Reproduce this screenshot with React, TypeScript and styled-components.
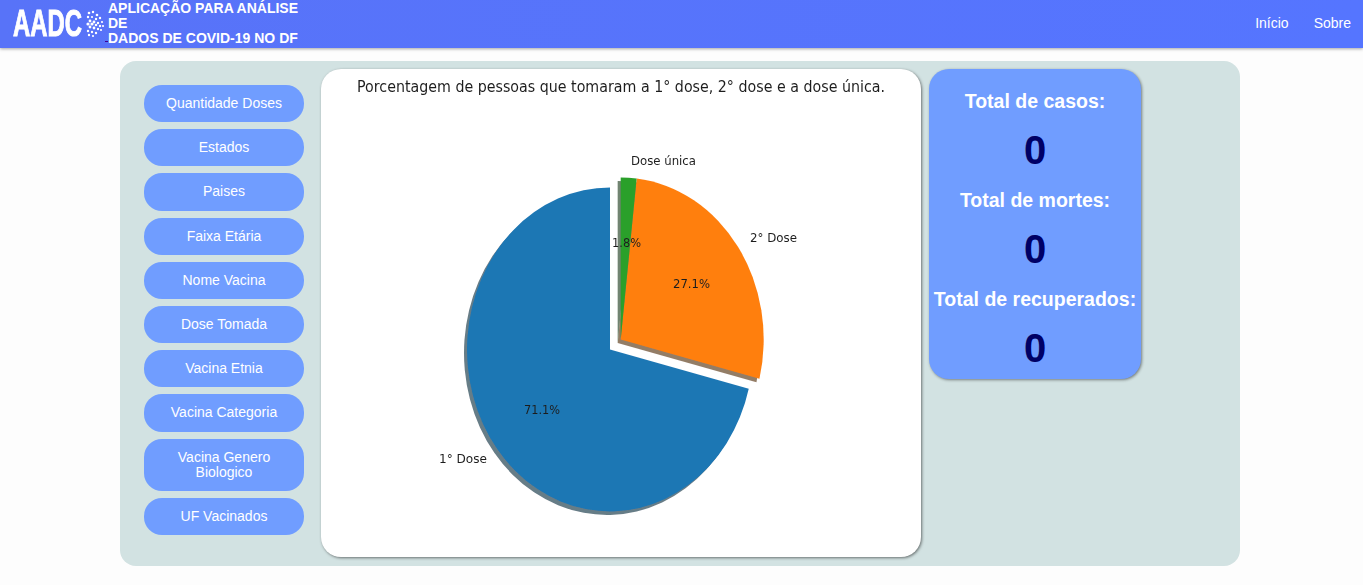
import React from "react";
import styled, { createGlobalStyle } from "styled-components";

const Global = createGlobalStyle`
  html, body { margin: 0; padding: 0; background: #fdfdfd; font-family: "Liberation Sans", Arial, sans-serif; }
`;

const Header = styled.header`
  height: 48px;
  display: flex;
  align-items: center;
  justify-content: space-between;
  background: linear-gradient(90deg, #5873f8 0%, #5575ff 100%);
  box-shadow: 0 1px 3px rgba(0, 0, 0, 0.35);
  color: #fff;
  padding: 0 12px 0 13px;
  position: relative;
`;

const Brand = styled.div`
  display: flex;
  align-items: center;
  position: relative;
`;

const LogoWrap = styled.div`
  width: 95px;
  height: 48px;
  display: flex;
  align-items: center;
  position: relative;
`;

const LogoWord = styled.span`
  display: inline-block;
  font-weight: 700;
  font-size: 37px;
  line-height: 30px;
  width: 71px;
  transform: scaleX(0.645);
  transform-origin: left center;
  white-space: nowrap;
  -webkit-text-stroke: 1px #fff;
  letter-spacing: 0;
`;

const LogoVirus = styled.svg`
  display: block;
  width: 20px;
  height: 30px;
  flex: none;
  margin-left: 1px;
`;

const LinkMark = styled.span`
  position: absolute;
  left: 92px;
  top: 41px;
  width: 3px;
  height: 1px;
  background: #400090;
`;

const Title = styled.div`
  font-size: 14px;
  font-weight: 700;
  line-height: 15px;
  margin-top: -1px;
  width: 210px;
`;

const Nav = styled.nav`
  display: flex;
  gap: 25px;
  font-size: 14px;
  margin-top: -2px;
`;

const Panel = styled.main`
  width: 1120px;
  height: 505px;
  box-sizing: border-box;
  margin: 13px 0 0 120px;
  padding: 8px 0 9px 24px;
  background: #d2e2e2;
  border-radius: 16px;
  display: flex;
  align-items: flex-start;
`;

const Sidebar = styled.aside`
  width: 160px;
  margin: 16px 17px 0 0;
  display: flex;
  flex-direction: column;
  gap: 7px;
`;

const MenuButton = styled.button`
  width: 160px;
  border: 0;
  padding: 11px 16px;
  background: #709dff;
  color: #fff;
  border-radius: 18px;
  font-family: inherit;
  font-size: 14px;
  line-height: 15.2px;
  text-align: center;
`;

const ChartCard = styled.section`
  width: 600px;
  height: 488px;
  background: #fff;
  border-radius: 20px;
  box-shadow: 1px 1px 3px rgba(0, 0, 0, 0.5);
  overflow: hidden;
  flex: none;
`;

const ChartSvg = styled.svg`
  display: block;
  width: 600px;
  height: 488px;
`;

const ChartText = styled.text`
  font-family: "DejaVu Sans", sans-serif;
  fill: #1f1f1f;
`;

const StatsCard = styled.section`
  width: 212px;
  height: 310px;
  box-sizing: border-box;
  margin-left: 8px;
  padding-top: 21px;
  background: #709dff;
  border-radius: 20px;
  box-shadow: 1px 1px 3px rgba(0, 0, 0, 0.45);
  text-align: center;
  flex: none;
`;

const StatLabel = styled.div`
  color: #fff;
  font-size: 19.5px;
  font-weight: 700;
  line-height: 23px;
  white-space: nowrap;
`;

const StatValue = styled.div`
  color: #000066;
  font-size: 40px;
  font-weight: 700;
  line-height: 46px;
  margin: 14px 0 16px;
`;

const menu = [
  "Quantidade Doses",
  "Estados",
  "Paises",
  "Faixa Etária",
  "Nome Vacina",
  "Dose Tomada",
  "Vacina Etnia",
  "Vacina Categoria",
  "Vacina Genero Biologico",
  "UF Vacinados",
];

const stats = ["Total de casos:", "Total de mortes:", "Total de recuperados:"];

const RX = 143;
const RY = 162;

function wedge(cx: number, cy: number, a0: number, a1: number): string {
  const p = (a: number) => {
    const r = (a * Math.PI) / 180;
    return `${(cx + RX * Math.cos(r)).toFixed(2)} ${(cy - RY * Math.sin(r)).toFixed(2)}`;
  };
  const large = a1 - a0 > 180 ? 1 : 0;
  return `M${cx} ${cy}L${p(a0)}A${RX} ${RY} 0 ${large} 0 ${p(a1)}Z`;
}

const slices = [
  { cx: 610, cy: 349.5, a0: 90, a1: 346, fill: "#1f77b4", shadow: "#09243699" },
  { cx: 620.7, cy: 339.5, a0: -14, a1: 83.6, fill: "#ff7f0e", shadow: "#4c260499" },
  { cx: 620.7, cy: 339.5, a0: 83.6, a1: 90, fill: "#2ca02c", shadow: "#0d300d99" },
];

const labels = [
  { x: 631, y: 165, w: 65, s: 12.5, t: "Dose única" },
  { x: 750, y: 242, w: 47, s: 12.5, t: "2° Dose" },
  { x: 439, y: 463, w: 48, s: 12.5, t: "1° Dose" },
  { x: 612, y: 247, w: 29, s: 12.5, t: "1.8%" },
  { x: 673, y: 288, w: 37, s: 12.5, t: "27.1%" },
  { x: 524, y: 414, w: 36, s: 12.5, t: "71.1%" },
];

const virusDots: [number, number, number][] = [
  [4, 4, 1.3], [8, 3, 1.2], [12, 6, 1.3], [3, 8, 1.2], [7, 8, 1.1], [11, 10, 1.2], [15, 9, 1.2],
  [5, 12, 1.4], [9, 13, 1.4], [13, 14, 1.2], [17, 13, 1.1], [3, 15, 1.6], [7, 15, 1.6], [11, 16, 1.3],
  [15, 17, 1.2], [18, 17, 1.1], [5, 18, 1.4], [9, 19, 1.4], [13, 20, 1.2], [16, 21, 1.1], [3, 22, 1.2],
  [7, 23, 1.2], [11, 24, 1.2], [4, 26, 1.2], [8, 27, 1.1],
];

export default function App() {
  return (
    <>
      <Global />
      <Header>
        <Brand>
          <LogoWrap>
            <LogoWord>AADC</LogoWord>
            <LogoVirus viewBox="0 0 20 30" aria-hidden>
              {virusDots.map(([x, y, r], i) => (
                <circle key={i} cx={x} cy={y} r={r} fill="#fff" />
              ))}
            </LogoVirus>
            <LinkMark />
          </LogoWrap>
          <Title>
            APLICAÇÃO PARA ANÁLISE DE
            <br />
            DADOS DE COVID-19 NO DF
          </Title>
        </Brand>
        <Nav>
          <span>Início</span>
          <span>Sobre</span>
        </Nav>
      </Header>
      <Panel>
        <Sidebar>
          {menu.map((m) => (
            <MenuButton key={m}>{m}</MenuButton>
          ))}
        </Sidebar>
        <ChartCard>
          <ChartSvg viewBox="321 69 600 488">
            <defs>
              <filter id="soft" x="-5%" y="-5%" width="110%" height="110%">
                <feGaussianBlur stdDeviation="0.35" />
              </filter>
            </defs>
            <g filter="url(#soft)">
              {slices.map((s, i) => (
                <path key={i} d={wedge(s.cx - 3, s.cy + 3.5, s.a0, s.a1)} fill={s.shadow} />
              ))}
              {slices.map((s, i) => (
                <path key={i} d={wedge(s.cx, s.cy, s.a0, s.a1)} fill={s.fill} />
              ))}
              <ChartText x={357} y={92} fontSize={16.5} textLength={528} lengthAdjust="spacingAndGlyphs">
                Porcentagem de pessoas que tomaram a 1° dose, 2° dose e a dose única.
              </ChartText>
              {labels.map((l) => (
                <ChartText key={l.t} x={l.x} y={l.y} fontSize={l.s} textLength={l.w} lengthAdjust="spacingAndGlyphs">
                  {l.t}
                </ChartText>
              ))}
            </g>
          </ChartSvg>
        </ChartCard>
        <StatsCard>
          {stats.map((s) => (
            <React.Fragment key={s}>
              <StatLabel>{s}</StatLabel>
              <StatValue>0</StatValue>
            </React.Fragment>
          ))}
        </StatsCard>
      </Panel>
    </>
  );
}
